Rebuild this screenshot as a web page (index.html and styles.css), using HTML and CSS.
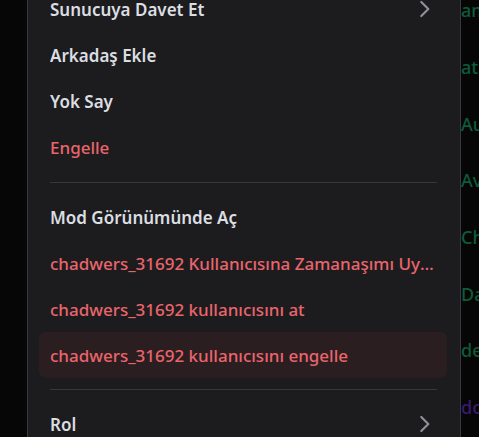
FILE: index.html
```html
<!DOCTYPE html>
<html lang="tr">
<head>
<meta charset="utf-8">
<title>Menu</title>
<link rel="stylesheet" href="styles.css">
</head>
<body>
<div class="page">
  <div class="strip"></div>
  <div class="menu">
    <div class="item white"><span class="label">Sunucuya Davet Et</span>
      <svg class="chev" viewBox="0 0 24 24" width="26" height="26"><polyline points="9.5,5.5 16,12 9.5,18.5" /></svg>
    </div>
    <div class="item white"><span class="label">Arkadaş Ekle</span></div>
    <div class="item white"><span class="label">Yok Say</span></div>
    <div class="item red"><span class="label">Engelle</span></div>
    <div class="sep"></div>
    <div class="item white"><span class="label">Mod Görünümünde Aç</span></div>
    <div class="item red"><span class="label">chadwers_31692 Kullanıcısına Zamanaşımı Uygula</span></div>
    <div class="item red"><span class="label">chadwers_31692 kullanıcısını at</span></div>
    <div class="item red active"><span class="label">chadwers_31692 kullanıcısını engelle</span></div>
    <div class="sep sep2"></div>
    <div class="item white"><span class="label">Rol</span>
      <svg class="chev" viewBox="0 0 24 24" width="26" height="26"><polyline points="9.5,5.5 16,12 9.5,18.5" /></svg>
    </div>
  </div>
  <div class="members">
    <div class="member green">am</div>
    <div class="member green">ata</div>
    <div class="member green">Au</div>
    <div class="member green">Av</div>
    <div class="member green">Ch</div>
    <div class="member green">Da</div>
    <div class="member green">der</div>
    <div class="member purple">do</div>
  </div>
</div>
</body>
</html>
```
FILE: styles.css
```css
html, body {
  margin: 0;
  padding: 0;
  background: #060607;
  overflow: hidden;
}
body {
  font-family: "Noto Sans", "Open Sans", sans-serif;
  width: 479px;
  height: 437px;
}
.page {
  display: flex;
  height: 437px;
  overflow: hidden;
}
.strip {
  width: 27px;
  flex: none;
  background: #060607;
}
.menu {
  flex: none;
  width: 408px;
  border-left: 1px solid #38383d;
  border-right: 1px solid #38383d;
  background: #1c1c1f;
  padding: 0 13px 0 11px;
  margin-top: -14px;
  display: flex;
  flex-direction: column;
}
.item {
  height: 46px;
  flex: none;
  display: flex;
  align-items: center;
  padding: 0 11px;
  border-radius: 7px;
  font-size: 17px;
  min-width: 0;
}
.label {
  flex: 1;
  min-width: 0;
  white-space: nowrap;
  overflow: hidden;
  text-overflow: ellipsis;
}
.white {
  color: #dbdee1;
  font-weight: 600;
}
.red {
  color: #ea656b;
  font-weight: 500;
}
.active {
  background: #2a1e21;
}
.chev {
  flex: none;
  margin-right: -1px;
}
.chev polyline {
  fill: none;
  stroke: #8f9197;
  stroke-width: 2;
  stroke-linecap: round;
  stroke-linejoin: round;
}
.sep {
  height: 1px;
  background: #36363b;
  margin: 12px 10px 11px 11px;
  flex: none;
}
.sep2 {
  margin-top: 11px;
}
.members {
  flex: 1;
  min-width: 0;
  overflow: hidden;
  margin-top: -18px;
  font-size: 18px;
  font-weight: 500;
}
.member {
  height: 56.7px;
  display: flex;
  align-items: center;
  white-space: nowrap;
}
.green {
  color: #0d5b3a;
}
.purple {
  color: #3a1a6e;
}
```
